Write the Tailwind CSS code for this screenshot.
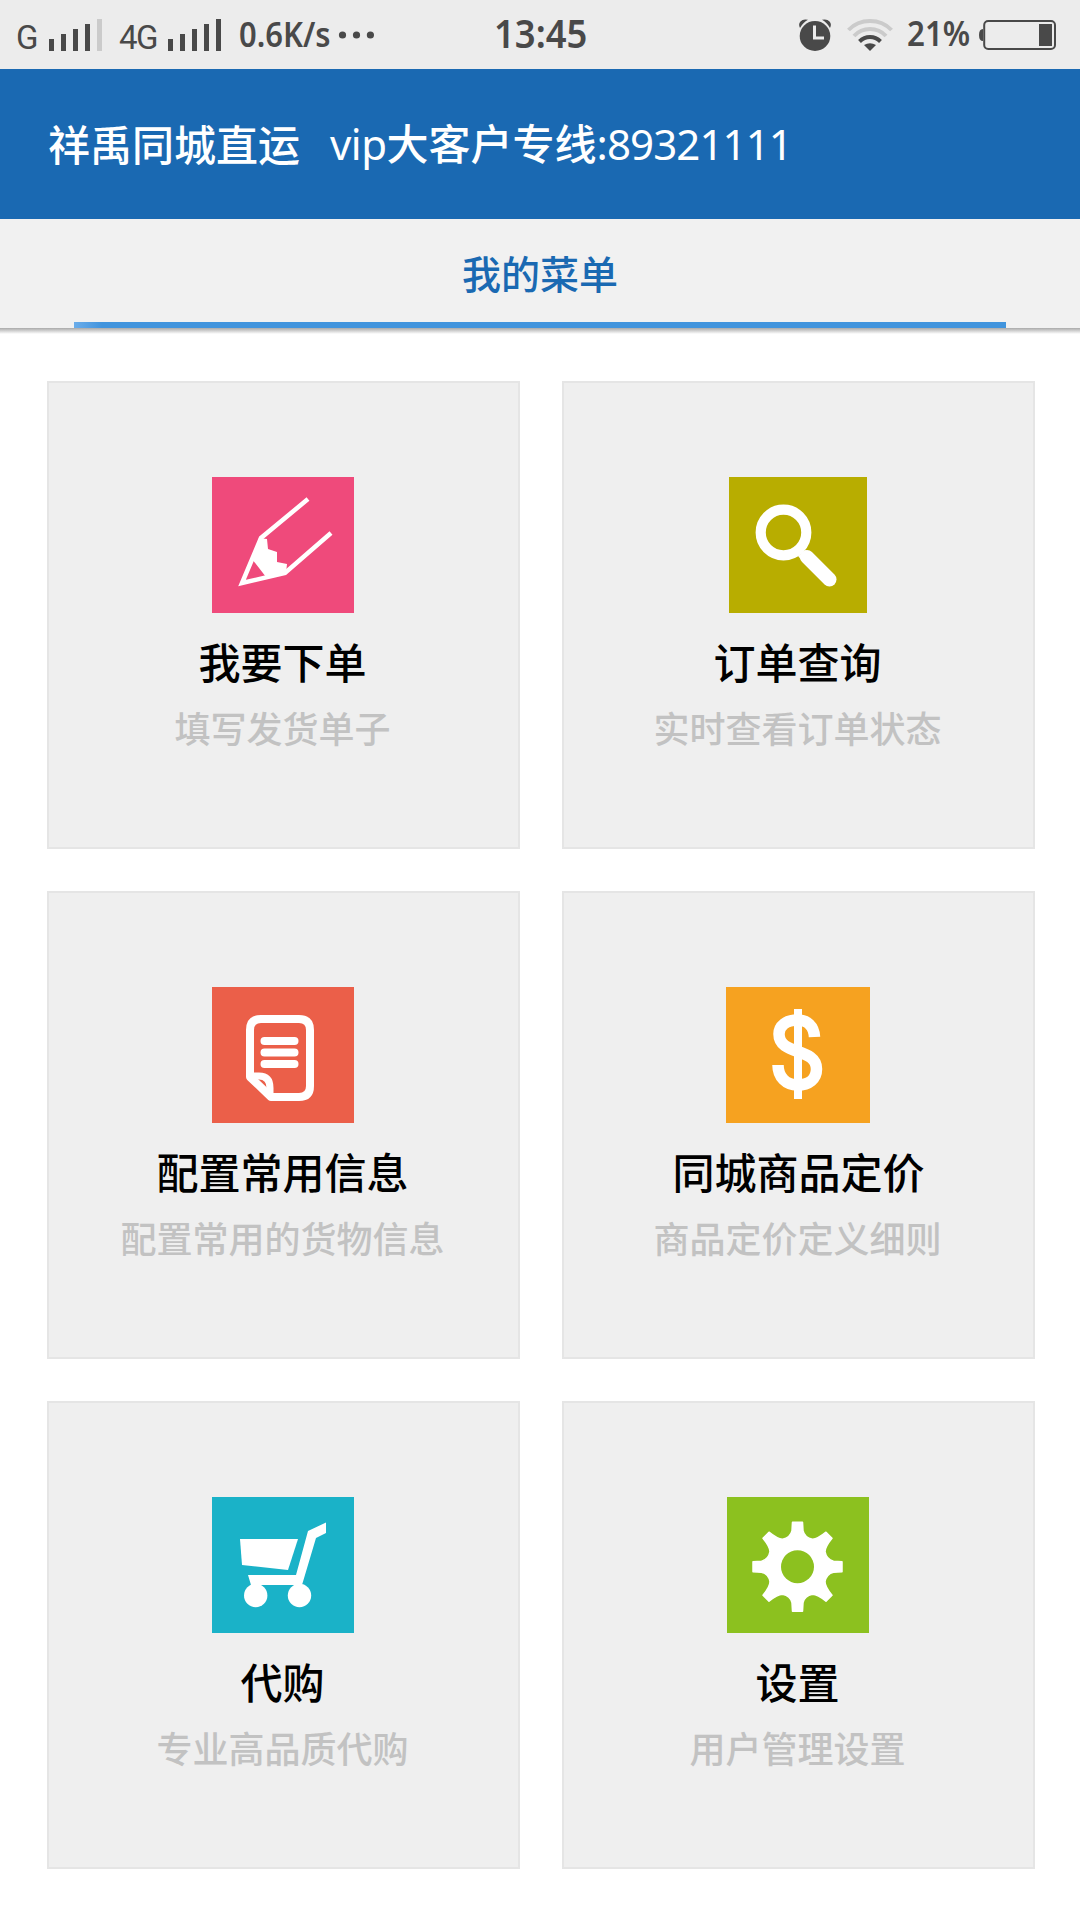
<!DOCTYPE html>
<html lang="zh-CN">
<head>
    <meta charset="UTF-8">
    <meta name="viewport" content="width=device-width, initial-scale=1.0">
    <title>祥禹同城直运</title>
    <script src="https://cdn.jsdelivr.net/npm/@tailwindcss/browser@4"></script>
</head>
<body class="bg-white font-['Noto_Sans','Noto_Sans_CJK_SC',sans-serif] overflow-x-hidden">
    <!-- Status bar -->
    <div class="flex items-center h-[69px] bg-[#ececec] text-[#494949] whitespace-nowrap">
        <span class="w-[49px] pl-4 pt-1.5 shrink-0 font-['Roboto'] text-[33px] leading-none">G</span>
        <svg class="w-[53px] h-8 shrink-0" viewBox="0 0 53 32" fill="currentColor">
            <path d="M0 20h5v12H0zM12 15h5v17h-5zM24 10h5v22h-5zM36 5h5v27h-5z"/>
            <path d="M48 0h5v32h-5z" fill="#cbcbcb"/>
        </svg>
        <span class="w-[66px] pl-[17px] pt-1.5 shrink-0 font-['Roboto'] text-[33px] leading-none tracking-[-1.5px]">4G</span>
        <svg class="w-[53px] h-8 shrink-0" viewBox="0 0 53 32" fill="currentColor">
            <path d="M0 20h5v12H0zM12 15h5v17h-5zM24 10h5v22h-5zM36 5h5v27h-5zM48 0h5v32h-5z"/>
        </svg>
        <div class="w-[117px] pl-[18px] shrink-0"><span class="inline-block origin-left scale-x-[0.91] text-[34px] leading-none font-semibold">0.6K/s</span></div>
        <svg class="w-9 h-2 shrink-0" viewBox="0 0 36 8" fill="currentColor">
            <circle cx="4.5" cy="4" r="3.6"/><circle cx="18.5" cy="4" r="3.6"/><circle cx="32.4" cy="4" r="3.6"/>
        </svg>
        <div class="ml-[120px] w-[304px] pb-0.5 shrink-0"><span class="inline-block origin-left scale-x-[0.91] text-[40px] leading-none font-semibold">13:45</span></div>
        <svg class="w-[34px] h-8 shrink-0" viewBox="0 0 34 32">
            <ellipse cx="17" cy="17" rx="15.3" ry="15" fill="currentColor"/>
            <path d="M2 9Q0 5 2.500 2.500Q5-.5 10 .8Q5 3.500 2 9zM32 9Q34 5 31.500 2.500Q29-.5 24 .8Q29 3.500 32 9z" fill="currentColor"/>
            <path d="M16.500 6.500v12.500h9.500" fill="none" stroke="#ececec" stroke-width="3"/>
        </svg>
        <svg class="ml-[15px] w-[46px] h-8 shrink-0" viewBox="0 0 46 32" fill="none" stroke-width="4">
            <path d="M1.500 11Q10 2 23 2T44.500 11" stroke="#cbcbcb"/>
            <path d="M7 17Q13.500 10 23 10T39 17" stroke="#cbcbcb"/>
            <path d="M12.500 22.500Q17 18 23 18T33.500 22.500" stroke="currentColor"/>
            <path d="M17 26Q23 22.500 29 26L23 32z" fill="currentColor"/>
        </svg>
        <div class="pl-[14px] w-[86px] pb-0.5 shrink-0"><span class="inline-block origin-left scale-x-[0.92] text-[34px] leading-none font-semibold">21%</span></div>
        <svg class="w-[77px] h-[30px] shrink-0" viewBox="0 0 77 30">
            <path d="M4 9Q0 9 0 15T4 21z" fill="currentColor"/>
            <rect x="5.200" y="1" width="70.800" height="28" rx="4" fill="none" stroke="currentColor" stroke-width="2"/>
            <path d="M60 4h13v22H60z" fill="currentColor"/>
        </svg>
    </div>

    <!-- Title bar -->
    <header class="flex items-center h-[150px] bg-[#1a69b2] text-white pl-12 text-[42px] leading-none whitespace-pre">
        <h1 class="pt-0.5 font-medium">祥禹同城直运</h1>
        <p class="pl-[30px]"><span class="tracking-[-0.5px]">vip</span><span class="font-medium">大客户专线</span><span class="tracking-[-0.9px]">:89321111</span></p>
    </header>

    <!-- Tabs -->
    <nav class="h-[109px] bg-[#f1f1f1] flex flex-col items-center">
        <div class="flex-1 pt-[5px] flex items-center text-[39px] leading-none font-medium text-[#1a69b2]">我的菜单</div>
        <div class="w-[932px] h-[6px] bg-linear-to-r from-[#6badea] via-[#4194dd] via-3% to-[#4194dd]"></div>
    </nav>
    <div class="h-[6px] bg-linear-to-b from-[#aaaaaa] to-white"></div>

    <!-- Menu -->
    <main class="grid grid-cols-[473px_473px] auto-rows-[468px] gap-x-[42px] gap-y-[42px] pl-[47px] pt-[47px]">
        <section class="bg-[#efefef] border-2 border-[#e5e5e5] pt-[94px] pr-[2px] flex flex-col items-center">
            <svg class="w-[142px] h-[136px] bg-[#ef4a7b]" viewBox="0 0 142 136">
                <path d="M96 22L49 61L30 106L73 96L119 56" fill="none" stroke="#fff" stroke-width="4.500"/>
                <path d="M47 61L55 62L56 72L65 75V85L75 87L74 96L54 100L40 82z" fill="#fff"/>
            </svg>
            <h2 class="mt-[29px] text-[42px] leading-[42px] font-medium text-black">我要下单</h2>
            <p class="mt-[28px] text-[36px] leading-[36px] font-medium text-[#c2c2c2]">填写发货单子</p>
        </section>

        <section class="bg-[#efefef] border-2 border-[#e5e5e5] pt-[94px] pr-[2px] flex flex-col items-center">
            <svg class="w-[138px] h-[136px] bg-[#b8ad00]" viewBox="0 0 138 136" fill="none" stroke="#fff">
                <circle cx="54.500" cy="55.500" r="22.800" stroke-width="10.200"/>
                <path d="M73 76L77 81" stroke-width="10"/>
                <path d="M78 80L100.500 102.500" stroke-width="14" stroke-linecap="round"/>
            </svg>
            <h2 class="mt-[29px] text-[42px] leading-[42px] font-medium text-black">订单查询</h2>
            <p class="mt-[28px] text-[36px] leading-[36px] font-medium text-[#c2c2c2]">实时查看订单状态</p>
        </section>

        <section class="bg-[#efefef] border-2 border-[#e5e5e5] pt-[94px] pr-[2px] flex flex-col items-center">
            <svg class="w-[142px] h-[136px] bg-[#eb5f49]" viewBox="0 0 142 136" fill="none" stroke="#fff" stroke-width="8">
                <path d="M38 90V43Q38 32 49 32H87Q98 32 98 43V99Q98 110 87 110H59z" stroke-linejoin="round"/>
                <path d="M40 89H47Q58 89 58 101V109" stroke-width="7"/>
                <path d="M52.500 54H82.500M52.500 65.500H82.500M52.500 77H82.500" stroke-linecap="round"/>
            </svg>
            <h2 class="mt-[29px] text-[42px] leading-[42px] font-medium text-black">配置常用信息</h2>
            <p class="mt-[28px] text-[36px] leading-[36px] font-medium text-[#c2c2c2]">配置常用的货物信息</p>
        </section>

        <section class="bg-[#efefef] border-2 border-[#e5e5e5] pt-[94px] pr-[2px] flex flex-col items-center">
            <svg class="w-[144px] h-[136px] bg-[#f6a220]" viewBox="0 0 144 136" fill="none" stroke="#fff">
                <path d="M72 22V112" stroke-width="8"/>
                <path d="M88.500 50C88 39 81 33 71.500 33C60 33 53 39 53 47C53 69 90.500 60 90.500 82C90.500 92 83 98 71.500 98C60 98 52 90 52 78" stroke-width="11.500"/>
            </svg>
            <h2 class="mt-[29px] pl-[2px] text-[42px] leading-[42px] font-medium text-black">同城商品定价</h2>
            <p class="mt-[28px] text-[36px] leading-[36px] font-medium text-[#c2c2c2]">商品定价定义细则</p>
        </section>

        <section class="bg-[#efefef] border-2 border-[#e5e5e5] pt-[94px] pr-[2px] flex flex-col items-center">
            <svg class="w-[142px] h-[136px] bg-[#1ab2c8]" viewBox="0 0 142 136" fill="#fff">
                <path d="M28 42H86L76 73L30 68z"/>
                <path d="M36 78H84L96 34L114 25.500V36L104 41L90 88H39z"/>
                <circle cx="43.700" cy="98.500" r="11.700"/><circle cx="87.500" cy="98.500" r="11.700"/>
            </svg>
            <h2 class="mt-[29px] text-[42px] leading-[42px] font-medium text-black">代购</h2>
            <p class="mt-[28px] text-[36px] leading-[36px] font-medium text-[#c2c2c2]">专业高品质代购</p>
        </section>

        <section class="bg-[#efefef] border-2 border-[#e5e5e5] pt-[94px] pr-[2px] flex flex-col items-center">
            <svg class="w-[142px] h-[136px] bg-[#8cc11f]" viewBox="0 0 142 136">
                <g transform="translate(70.500 69.700)">
                    <!-- eight teeth joined by concave arcs -->
                    <path fill="#fff" stroke="#fff" stroke-width="1.500" stroke-linejoin="round" d="M-5-44.500H5L5.500-36Q7-29 15-27.500Q20-27.500 28.500-34.500L34.500-28.500Q27.500-20 27.500-15Q29-7 36-5.500L44.500-5V5L36 5.500Q29 7 27.500 15Q27.500 20 34.500 28.500L28.500 34.500Q20 27.500 15 27.500Q7 29 5.500 36L5 44.500H-5L-5.500 36Q-7 29-15 27.500Q-20 27.500-28.500 34.500L-34.500 28.500Q-27.500 20-27.500 15Q-29 7-36 5.500L-44.500 5V-5L-36-5.500Q-29-7-27.500-15Q-27.500-20-34.500-28.500L-28.500-34.500Q-20-27.500-15-27.500Q-7-29-5.500-36z"/>
                    <circle r="16.500" fill="#8cc11f"/>
                </g>
            </svg>
            <h2 class="mt-[29px] text-[42px] leading-[42px] font-medium text-black">设置</h2>
            <p class="mt-[28px] text-[36px] leading-[36px] font-medium text-[#c2c2c2]">用户管理设置</p>
        </section>
    </main>
</body>
</html>
